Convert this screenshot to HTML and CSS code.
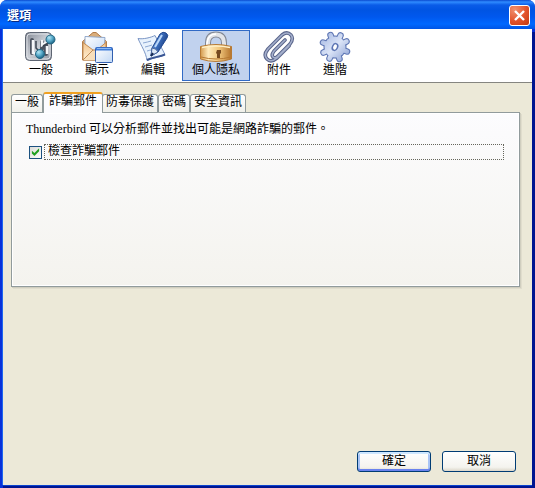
FILE: index.html
```html
<!DOCTYPE html>
<html lang="zh-Hant">
<head>
<meta charset="utf-8">
<title>選項</title>
<link rel="stylesheet" href="styles.css">
</head>
<body>
<div class="window">
  <header class="titlebar">
    <h1>選項</h1>
    <button class="close" type="button" aria-label="關閉"><svg width="13" height="13" viewBox="0 0 13 13"><path d="M2 2l9 9M11 2l-9 9" stroke="#fff" stroke-width="2.4"/></svg></button>
  </header>
  <div class="body">
    <nav class="toolbar">
      <button class="tool" type="button">
        <svg width="32" height="32" viewBox="0 0 32 32">
          <defs>
            <linearGradient id="metal" x1="0" y1="0" x2="1" y2="1"><stop offset="0" stop-color="#838994"/><stop offset=".5" stop-color="#c9cdd4"/><stop offset="1" stop-color="#8f95a1"/></linearGradient>
            <radialGradient id="ball" cx=".35" cy=".3" r=".75"><stop offset="0" stop-color="#b5e5f2"/><stop offset=".5" stop-color="#56a9c9"/><stop offset="1" stop-color="#175b7c"/></radialGradient>
          </defs>
          <rect x=".5" y="1.500" width="26" height="28" rx="4" fill="url(#metal)" stroke="#5d6572"/>
          <rect x="2" y="3" width="23" height="25" rx="3" fill="none" stroke="#dfe2e7"/>
          <path d="M7 9v13M17 11v7M21 14v9" stroke="#4c5360" stroke-width="4" stroke-linecap="round"/>
          <path d="M8 9v13l6 1M17 9v5l7-4M22 15v8" fill="none" stroke="#f6f7f9" stroke-width="2.500"/>
          <path d="M11 10v7l4 4M18 15l7-4" fill="none" stroke="#3c4450" stroke-width="1.500"/>
          <circle cx="15" cy="23" r="4.500" fill="url(#ball)" stroke="#256783"/>
          <circle cx="25.500" cy="8.500" r="4.500" fill="url(#ball)" stroke="#256783"/>
        </svg><span>一般</span>
      </button>
      <button class="tool" type="button">
        <svg width="32" height="32" viewBox="0 0 32 32">
          <defs>
            <linearGradient id="env" x1="0" y1="0" x2="0" y2="1"><stop offset="0" stop-color="#f2c58d"/><stop offset="1" stop-color="#fff0d6"/></linearGradient>
            <linearGradient id="pane" x1="0" y1="0" x2="1" y2="1"><stop offset="0" stop-color="#fff"/><stop offset="1" stop-color="#c1d8f5"/></linearGradient>
          </defs>
          <path d="M1.500 10.500L12 1.500h3l10.500 9V29h-24z" fill="#d9ad7b" stroke="#b27a46"/>
          <path d="M4 5.500l20 1-1 12-9 3-10-7z" fill="url(#pane)" stroke="#91a9cc"/>
          <path d="M2 11.500l12 9 11-9V29H2z" fill="url(#env)" stroke="#c18b54"/>
          <path d="M2 29l10-10h4l9 10" fill="#f9dfba" stroke="#c18b54"/>
          <rect x="14.500" y="16.500" width="17" height="15" rx="1" fill="url(#pane)" stroke="#315fb0"/>
          <path d="M15 18h16" stroke="#3e7cd9" stroke-width="3"/>
          <path d="M16 17.500h14" stroke="#8bb9f5"/>
        </svg><span>顯示</span>
      </button>
      <button class="tool" type="button">
        <svg width="32" height="32" viewBox="0 0 32 32">
          <defs><linearGradient id="pen" x1="0" y1="0" x2="1" y2=".6"><stop offset="0" stop-color="#8eb9f0"/><stop offset=".5" stop-color="#3d6fbe"/><stop offset="1" stop-color="#153578"/></linearGradient></defs>
          <path d="M1 7.500c5 1 13-1 17-3l10 19c-5 3-11 3-18 6-1-8-6-15-9-22z" fill="#e8f2fd" stroke="#7b96c5"/>
          <path d="M10 29c6-3 12-3 18-5.500" fill="none" stroke="#3a5694" stroke-width="2"/>
          <path d="M6 12q5-1 8-2M8 16q4-1 7-2M10 20q3-1 5-1" fill="none" stroke="#8ca8d3"/>
          <path d="M15 17L23 3q3-3 6-1 3 2 1 5l-9 14-7 4z" fill="url(#pen)" stroke="#234a91"/>
          <path d="M15 17q4 0 6 4l-7 4z" fill="#dce8f6" stroke="#49669c"/>
          <path d="M18 16l7-12" stroke="#b9d7fa" stroke-width="2"/>
          <path d="M14 25l2-3" stroke="#152952" stroke-width="2"/>
        </svg><span>編輯</span>
      </button>
      <button class="tool tool-on" type="button" aria-pressed="true">
        <svg width="32" height="32" viewBox="0 0 32 32">
          <defs>
            <linearGradient id="brass" x1="0" y1="0" x2="1" y2="0"><stop offset="0" stop-color="#d39a4e"/><stop offset=".25" stop-color="#ffebbd"/><stop offset=".6" stop-color="#f1c77e"/><stop offset="1" stop-color="#b5732b"/></linearGradient>
          </defs>
          <path d="M8 18v-6q0-8.500 8-8.500t8 8.500v6" fill="none" stroke="#828894" stroke-width="6"/>
          <path d="M8 18v-6q0-8.500 8-8.500t8 8.500v6" fill="none" stroke="#e2e4e8" stroke-width="4"/>
          <path d="M7 18v-6q1-9 9-9" fill="none" stroke="#fff" stroke-width="1.500"/>
          <path d="M.5 15.500q15.500-4 31 0V28q-15.500 5-31 0z" fill="url(#brass)" stroke="#b77a34"/>
          <path d="M2 16.500q14-3 28 0" fill="none" stroke="#fff0c7" stroke-width="1.500"/>
          <path d="M1 26q15 4 30 0" fill="none" stroke="#b77932"/>
          <path d="M17 19h4v3l-1 1v4h-3v-4l-1-1z" fill="#76491f"/>
        </svg><span>個人隱私</span>
      </button>
      <button class="tool" type="button">
        <svg width="32" height="32" viewBox="0 0 32 32">
          <defs><path id="clip" d="M22 9L11 20q-3 4-1 6t5-1L27 13q4-5 1-9-4-4-9 0L5 18q-5 6-1 10 4 4 10-1l12-12"/></defs>
          <g fill="none" stroke-linecap="round" stroke-linejoin="round">
            <use href="#clip" stroke="#59648a" stroke-width="3.600"/>
            <use href="#clip" stroke="#a3aecb" stroke-width="1.600"/>
          </g>
        </svg><span>附件</span>
      </button>
      <button class="tool" type="button">
        <svg width="32" height="32" viewBox="0 0 32 32">
          <defs>
            <linearGradient id="gear" gradientUnits="userSpaceOnUse" x1="3" y1="3" x2="29" y2="29"><stop offset="0" stop-color="#a5b8e2"/><stop offset=".5" stop-color="#dbe4f7"/><stop offset="1" stop-color="#8ea3d4"/></linearGradient>
            <path id="teeth" d="M11.500 4l9 24M4 11.500l24 9M4.500 21.500l23-11M10.500 27.500l11-23"/>
          </defs>
          <use href="#teeth" stroke="#5e76b4" stroke-width="6.500" stroke-linecap="round"/>
          <circle cx="16" cy="16" r="11.500" fill="#5e76b4"/>
          <use href="#teeth" stroke="url(#gear)" stroke-width="4.500" stroke-linecap="round"/>
          <circle cx="16" cy="16" r="10.500" fill="url(#gear)"/>
          <ellipse cx="16" cy="16" rx="2.500" ry="3.500" fill="#fff" stroke="#5e76b4" stroke-width="1.500" transform="rotate(25 16 16)"/>
        </svg><span>進階</span>
      </button>
    </nav>
    <main>
      <div class="tabs" role="tablist">
        <button class="tab" type="button" role="tab">一般</button>
        <button class="tab tab-on" type="button" role="tab" aria-selected="true">詐騙郵件</button>
        <button class="tab" type="button" role="tab">防毒保護</button>
        <button class="tab" type="button" role="tab">密碼</button>
        <button class="tab" type="button" role="tab">安全資訊</button>
      </div>
      <section class="panel" role="tabpanel">
        <p>Thunderbird 可以分析郵件並找出可能是網路詐騙的郵件。</p>
        <div class="check">
          <input type="checkbox" id="scam" checked>
          <label for="scam">檢查詐騙郵件</label>
        </div>
      </section>
    </main>
    <footer>
      <button class="action action-default" type="button">確定</button>
      <button class="action" type="button">取消</button>
    </footer>
  </div>
</div>
</body>
</html>
```
FILE: styles.css
```css
* { box-sizing: border-box; }
body {
  margin: 0;
  background: #fff;
  color: #000;
  font: 12px/16px "Liberation Serif", "Noto Sans CJK TC", serif;
}
button { padding: 0; font: inherit; color: inherit; }
h1, p { margin: 0; }
.window {
  display: flex;
  flex-direction: column;
  min-height: 100vh;
  overflow: hidden;
  border-radius: 7px 7px 0 0;
  background: #0831d9;
}
.titlebar {
  display: flex;
  align-items: center;
  justify-content: space-between;
  height: 29px;
  padding: 2px 5px 0 7px;
  background: linear-gradient(#0a4ad0 0, #2f8bff 2px, #0a5ce8 5px, #0054e3 10px, #0058ee 17px, #0068ff 24px, #0055e5 29px);
}
h1 {
  color: #fff;
  font-size: 12px;
  font-weight: 700;
  line-height: 16px;
  text-shadow: 1px 1px #0a2a80;
}
.close {
  display: grid;
  place-items: center;
  width: 21px;
  height: 21px;
  border: 1px solid #fff;
  border-radius: 3px;
  background: radial-gradient(circle at 25% 20%, #f0906e, #e2532b 55%, #c23a10);
}
.body {
  display: flex;
  flex: 1;
  flex-direction: column;
  margin: 0 3px 3px;
  background: #ece9d8;
  box-shadow: -1px 0 #1c66f0, 0 1px #0a43cf, 0 3px #001590, 3px 3px #001590;
}
.toolbar {
  display: flex;
  height: 54px;
  padding: 1px 10px;
  border-bottom: 1px solid #858580;
  background: #fff;
}
.tool {
  display: flex;
  flex-direction: column;
  align-items: center;
  min-width: 56px;
  padding: 0 9px;
  border: 1px solid transparent;
  background: none;
}
.tool svg { display: block; flex: none; }
.tool span { margin-top: -1px; }
.tool-on { margin: 0 1px; border-color: #316ac5; background: #c1d2ee; }
main { flex: 1; padding: 9px 12px 0 8px; }
.tabs { display: flex; align-items: flex-end; height: 20px; }
.tab {
  height: 18px;
  padding: 0 3px 3px;
  border: 1px solid #919b9c;
  border-bottom: 0;
  border-radius: 3px 3px 0 0;
  background: linear-gradient(#fff, #f0f0ea);
  line-height: 14px;
}
.tab-on {
  position: relative;
  height: 21px;
  margin: 0 -1px -1px 0;
  padding: 0 5px 6px;
  border-top: 2px solid #f0a020;
  background: #fcfcfe;
}
.panel {
  height: 175px;
  padding: 8px 15px 0 14px;
  border: 1px solid #919b9c;
  background: linear-gradient(#fcfcfe, #f4f3ee);
  box-shadow: inset 0 0 0 1px #fff, 1px 1px #d0cebf, 2px 2px #e0ddcd;
}
.check {
  display: flex;
  align-items: center;
  gap: 2px;
  margin-top: 7px;
}
.check input {
  display: grid;
  place-items: center;
  width: 13px;
  height: 13px;
  margin: 0 0 0 3px;
  appearance: none;
  border: 1px solid #1c5180;
  background: linear-gradient(135deg, #dcdcd7, #fff);
}
.check input:checked::before {
  content: "";
  width: 9px;
  height: 9px;
  background: #21a121;
  clip-path: polygon(10% 35%, 38% 60%, 90% 8%, 90% 42%, 38% 95%, 10% 68%);
}
.check label {
  flex: 1;
  height: 16px;
  padding-left: 3px;
  border: 1px dotted #66665c;
  line-height: 12px;
}
footer {
  display: flex;
  justify-content: flex-end;
  gap: 11px;
  padding: 0 16px 13px;
}
.action {
  width: 74px;
  height: 21px;
  padding-bottom: 2px;
  border: 1px solid #003c74;
  border-radius: 3px;
  background: linear-gradient(#fff, #f4f3ee 80%, #dcd7ca);
  line-height: 16px;
}
.action-default { box-shadow: inset 0 2px #cee7ff, inset 0 -2px #6982ee, inset 2px 0 #a9c4f5, inset -2px 0 #a9c4f5; }
```
